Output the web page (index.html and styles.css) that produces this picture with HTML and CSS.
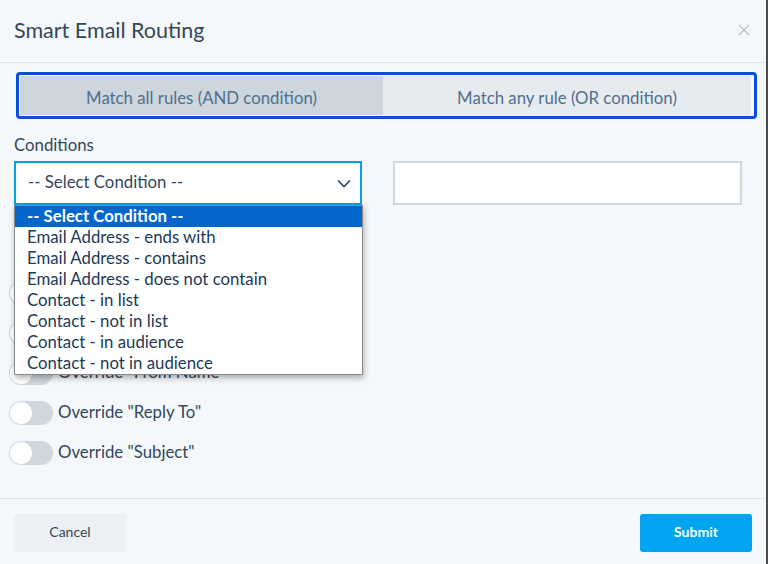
FILE: index.html
```html
<!DOCTYPE html>
<html>
<head>
<meta charset="utf-8">
<link rel="stylesheet" href="styles.css">
</head>
<body>
<div class="modal">
  <header class="head">
    <h1 class="title">Smart Email Routing</h1>
    <svg class="close" width="12" height="12" viewBox="0 0 12 12"><path d="M1 1 L11 11 M11 1 L1 11" stroke="#b4bfca" stroke-width="1.3" fill="none"/></svg>
  </header>
  <main class="content">
    <div class="seg-wrap">
      <div class="seg">
        <div class="seg-item active">Match all rules (AND condition)</div>
        <div class="seg-item">Match any rule (OR condition)</div>
      </div>
    </div>
    <div class="label">Conditions</div>
    <div class="cond-row">
      <div class="select-box">
        <div class="select">
          <span>-- Select Condition --</span>
          <svg class="chev" width="14" height="9" viewBox="0 0 14 9"><path d="M1 1.5 L7 7.5 L13 1.5" fill="none" stroke="#33475b" stroke-width="1.6"/></svg>
        </div>
        <ul class="dropdown">
          <li class="sel">-- Select Condition --</li>
          <li>Email Address - ends with</li>
          <li>Email Address - contains</li>
          <li>Email Address - does not contain</li>
          <li>Contact - in list</li>
          <li>Contact - not in list</li>
          <li>Contact - in audience</li>
          <li>Contact - not in audience</li>
        </ul>
      </div>
      <div class="input"></div>
    </div>
    <div class="toggles">
      <div class="toggle-row"><span class="toggle"></span><span class="tlabel">Override "To"</span></div>
      <div class="toggle-row"><span class="toggle"></span><span class="tlabel">Override "From Email"</span></div>
      <div class="toggle-row"><span class="toggle"></span><span class="tlabel">Override "From Name"</span></div>
      <div class="toggle-row"><span class="toggle"></span><span class="tlabel">Override "Reply To"</span></div>
      <div class="toggle-row"><span class="toggle"></span><span class="tlabel">Override "Subject"</span></div>
    </div>
  </main>
  <footer class="foot">
    <button class="btn cancel">Cancel</button>
    <button class="btn submit">Submit</button>
  </footer>
</div>
</body>
</html>
```
FILE: styles.css
```css
* { box-sizing: border-box; }
html, body { margin: 0; padding: 0; }
body {
  background: #f5f8fa;
  font-family: Lato, "Noto Sans", sans-serif;
  color: #33475b;
}
.modal {
  width: 768px;
  height: 564px;
  display: flex;
  flex-direction: column;
  border-right: 2px solid #4b4b4b;
  background: #f5f8fa;
}
.head {
  height: 63px;
  border-bottom: 1px solid #dfe3eb;
  display: flex;
  align-items: center;
  justify-content: space-between;
  padding: 0 16px 3px 14px;
  flex: none;
}
.title {
  margin: 0;
  font-size: 21.5px;
  font-weight: 400;
  color: #33475b;
}
.close { display: block; }
.content {
  flex: 1;
  padding: 9px 9px 0 14px;
  position: relative;
}
.seg-wrap {
  margin-left: 2px;
  border: 3px solid #0b4fd9;
  border-radius: 4px;
  padding: 1px 3px 1px 1px;
}
.seg {
  display: flex;
  height: 39px;
}
.seg-item {
  flex: 1;
  display: flex;
  align-items: center;
  justify-content: center;
  padding-top: 4px;
  font-size: 16.8px;
  color: #516f90;
  background: #e6ebef;
}
.seg-item.active {
  flex: 0 0 363px;
  background: #cdd5dd;
}
.label {
  margin-top: 16px;
  font-size: 16.8px;
  line-height: 20px;
  color: #33475b;
}
.cond-row {
  display: flex;
  gap: 31px;
  margin-top: 6px;
}
.select-box {
  position: relative;
  width: 348px;
}
.select {
  height: 44px;
  border: 2px solid #00a4e4;
  background: #fff;
  display: flex;
  align-items: center;
  justify-content: space-between;
  padding: 0 9px 3px 12px;
  font-size: 16.8px;
  color: #33475b;
}
.chev { display: block; margin-top: 3px; }
.input {
  width: 349px;
  height: 44px;
  border: 2px solid #cfd7df;
  background: #fff;
}
.dropdown {
  position: absolute;
  top: 44px;
  left: 0;
  width: 349px;
  margin: 0;
  padding: 0;
  list-style: none;
  background: #fff;
  border: 1px solid #8a8a8a;
  box-shadow: 1px 3px 6px rgba(0,0,0,0.3);
  z-index: 5;
}
.dropdown li {
  height: 21px;
  line-height: 19px;
  padding-left: 12px;
  font-size: 16.8px;
  color: #213a57;
  white-space: nowrap;
}
.dropdown li.sel {
  background: #0266cc;
  color: #fff;
  font-weight: 700;
}
.toggles {
  margin-top: 76px;
  margin-left: -5px;
  display: flex;
  flex-direction: column;
  gap: 16px;
}
.toggle-row {
  display: flex;
  align-items: center;
  height: 24px;
}
.toggle {
  width: 44px;
  height: 24px;
  border-radius: 12px;
  background: #cfd7df;
  position: relative;
  margin-right: 5px;
  flex: none;
}
.toggle::after {
  content: "";
  position: absolute;
  left: 1px;
  top: 1px;
  width: 22px;
  height: 22px;
  border-radius: 50%;
  background: #fff;
}
.tlabel {
  font-size: 16.8px;
  line-height: 20px;
  padding-bottom: 3px;
  color: #33475b;
}
.foot {
  flex: none;
  height: 66px;
  border-top: 1px solid #dfe3eb;
  display: flex;
  justify-content: space-between;
  align-items: flex-start;
  padding: 15px 14px 0 14px;
}
.btn {
  width: 112px;
  height: 38px;
  border: none;
  border-radius: 3px;
  font-family: Lato, "Noto Sans", sans-serif;
  font-size: 14px;
  padding-bottom: 4px;
}
.cancel {
  background: #eaf0f4;
  color: #33475b;
}
.submit {
  background: #00a4ef;
  color: #fff;
  font-weight: 700;
}
```
